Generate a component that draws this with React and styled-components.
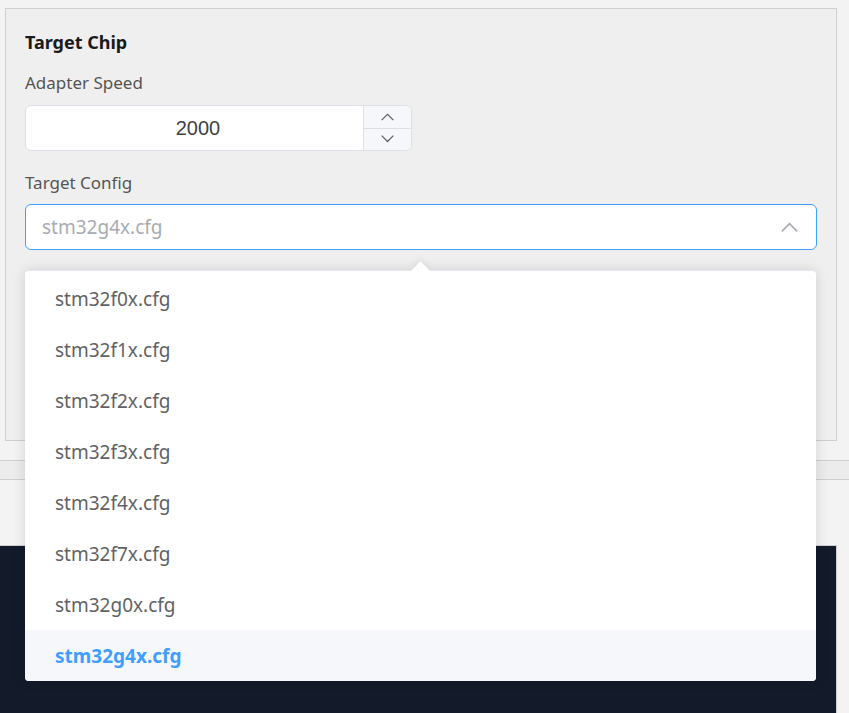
import React from "react";
import styled, { createGlobalStyle } from "styled-components";

const Global = createGlobalStyle`
  html, body { margin: 0; padding: 0; background: #f3f3f3; }
  body { font-family: "Noto Sans", "Open Sans", sans-serif; }
  * { box-sizing: border-box; }
`;

const Page = styled.div`
  width: 849px;
  height: 713px;
  overflow: hidden;
  display: flex;
  flex-direction: column;
  background: #f3f3f3;
`;

const Panel = styled.section`
  margin: 8px 12px 0 5px;
  height: 433px;
  border: 1px solid #cfcfcf;
  background: #efefef;
  padding: 21px 19px 0 19px;
  display: flex;
  flex-direction: column;
`;

const Title = styled.h3`
  margin: 0;
  font-size: 18px;
  line-height: 24px;
  font-weight: 700;
  color: #1a1a1a;
`;

const Label = styled.label`
  display: block;
  margin-top: ${(p) => p.$mt}px;
  font-size: 17px;
  line-height: 24px;
  color: #555;
`;

const NumberBox = styled.div`
  margin-top: 10px;
  width: 387px;
  height: 46px;
  display: flex;
  background: #fff;
  border: 1px solid #dcdfe6;
  border-radius: 6px;
  overflow: hidden;
`;

const NumberValue = styled.div`
  flex: 1;
  display: flex;
  align-items: center;
  justify-content: center;
  padding-left: 7px;
  font-family: "Liberation Sans", Arial, sans-serif;
  font-size: 20px;
  color: #3f4145;
`;

const Stepper = styled.div`
  width: 48px;
  display: flex;
  flex-direction: column;
  border-left: 1px solid #dcdfe6;
  background: #f5f7fa;
`;

const StepBtn = styled.div`
  flex: 1;
  display: flex;
  align-items: center;
  justify-content: center;
  & + & { border-top: 1px solid #dcdfe6; }
`;

const SelectWrap = styled.div`
  position: relative;
  margin-top: 9px;
`;

const SelectBox = styled.div`
  height: 46px;
  background: #fff;
  border: 1px solid #409eff;
  border-radius: 6px;
  display: flex;
  align-items: center;
  padding: 0 18px 0 16px;
`;

const Placeholder = styled.span`
  flex: 1;
  font-size: 19px;
  color: #a8abb2;
`;

const Dropdown = styled.div`
  position: absolute;
  left: 0;
  top: calc(100% + 20px);
  width: 791px;
  background: #fff;
  border-top: 1px solid #e4e7ed;
  border-radius: 4px;
  box-shadow: 0 0 14px rgba(0, 0, 0, 0.13);
  padding-top: 2px;
  z-index: 10;
`;

const Caret = styled.div`
  position: absolute;
  top: -7px;
  left: 389px;
  width: 13px;
  height: 13px;
  background: #fff;
  transform: rotate(45deg);
  box-shadow: -3px -3px 6px rgba(0, 0, 0, 0.04);
`;

const Item = styled.div`
  position: relative;
  height: 51px;
  display: flex;
  align-items: center;
  padding-left: 30px;
  font-size: 19px;
  color: ${(p) => (p.$active ? "#409eff" : "#606266")};
  font-weight: ${(p) => (p.$active ? 700 : 400)};
  background: ${(p) => (p.$active ? "#f5f7fa" : "#fff")};
  &:last-child { border-radius: 0 0 4px 4px; }
`;

const Band = styled.div`
  margin-top: 19px;
  height: 20px;
  background: #ececec;
  border-top: 1px solid #cfcfcf;
  border-bottom: 1px solid #cfcfcf;
`;

const Dark = styled.div`
  margin-top: 65px;
  width: 837px;
  flex: 1;
  background: #131a29;
  border-right: 1px solid #cfcfcf;
  border-top: 1px solid #cfcfcf;
`;

const Chevron = ({ up, size = 12, color = "#606266", w = 1.2 }) => (
  <svg width={size} height={size * 0.6} viewBox="0 0 20 12" fill="none">
    <path
      d={up ? "M1 11 L10 2 L19 11" : "M1 1 L10 10 L19 1"}
      stroke={color}
      strokeWidth={w * 1.6}
    />
  </svg>
);

const items = [
  "stm32f0x.cfg",
  "stm32f1x.cfg",
  "stm32f2x.cfg",
  "stm32f3x.cfg",
  "stm32f4x.cfg",
  "stm32f7x.cfg",
  "stm32g0x.cfg",
  "stm32g4x.cfg",
];

export default function App() {
  return (
    <>
      <Global />
      <Page>
        <Panel>
          <Title>Target Chip</Title>
          <Label $mt={17}>Adapter Speed</Label>
          <NumberBox>
            <NumberValue>2000</NumberValue>
            <Stepper>
              <StepBtn>
                <Chevron up size={13} />
              </StepBtn>
              <StepBtn>
                <Chevron size={13} />
              </StepBtn>
            </Stepper>
          </NumberBox>
          <Label $mt={20}>Target Config</Label>
          <SelectWrap>
            <SelectBox>
              <Placeholder>stm32g4x.cfg</Placeholder>
              <Chevron up size={17} color="#a8abb2" />
            </SelectBox>
            <Dropdown>
              <Caret />
              {items.map((it) => (
                <Item key={it} $active={it === "stm32g4x.cfg"}>
                  {it}
                </Item>
              ))}
            </Dropdown>
          </SelectWrap>
        </Panel>
        <Band />
        <Dark />
      </Page>
    </>
  );
}
